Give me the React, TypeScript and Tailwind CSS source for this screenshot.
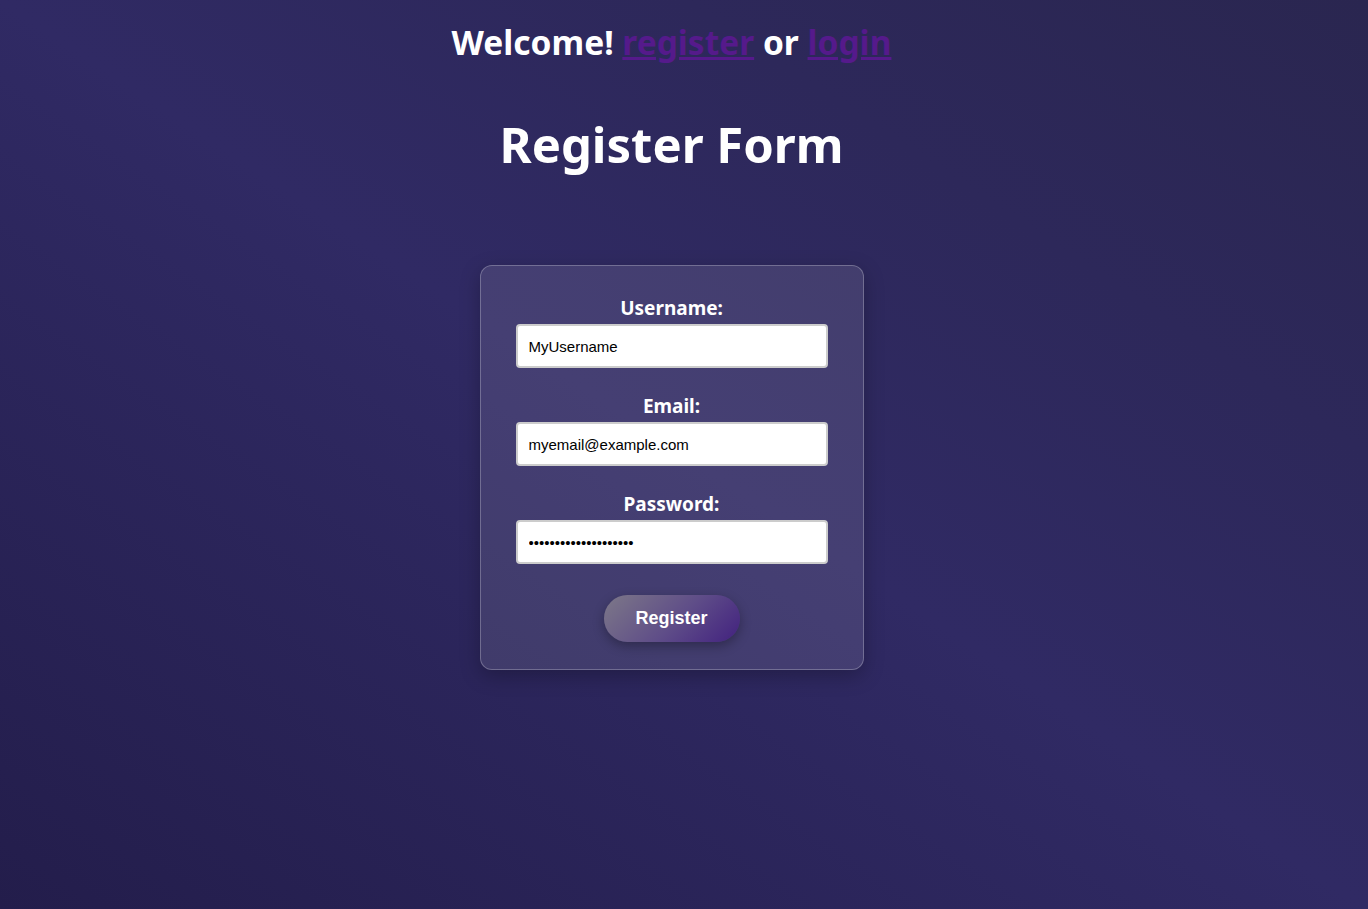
import { useState } from 'react';

const seg = { fontFamily: '"Noto Sans", "Open Sans", sans-serif' };

function Field({ label, type, value, onChange }: { label: string; type: string; value: string; onChange: (v: string) => void }) {
  return (
    <label className="flex flex-col items-center">
      <span className="mb-[3px] text-[19px] font-bold leading-[26px] text-white" style={seg}>
        {label}
      </span>
      <input
        type={type}
        value={value}
        onChange={(e) => onChange(e.target.value)}
        className="h-[44px] w-[312px] rounded-[4px] border-2 border-[#cccccc] bg-white px-[11px] text-[15px] text-black outline-none"
        style={{ fontFamily: '"Liberation Sans", Arial, sans-serif' }}
      />
    </label>
  );
}

export default function App() {
  const [username, setUsername] = useState('MyUsername');
  const [email, setEmail] = useState('myemail@example.com');
  const [password, setPassword] = useState('MySecretPassword1234');

  return (
    <div className="min-h-[909px] w-full bg-[linear-gradient(to_top_right,#231d4b,#302a64_50%,#2a2650)] pr-[25px] text-white">
      <div className="flex flex-col items-center">
        <h2 className="mt-[18px] text-[33.5px] font-bold leading-[48px]" style={seg}>
          Welcome!{' '}
          <a href="#" className="text-[#551a8b] underline">register</a>{' '}
          or{' '}
          <a href="#" className="text-[#551a8b] underline">login</a>
        </h2>
        <h1 className="mt-[42px] text-[49px] font-bold leading-[72px]" style={seg}>
          Register Form
        </h1>

        <form
          onSubmit={(e) => e.preventDefault()}
          className="mt-[85px] flex w-[384px] flex-col items-center gap-[31px] rounded-[12px] border border-white/25 bg-white/10 px-[35px] pb-[27px] pt-[29px] shadow-[0_6px_20px_rgba(0,0,0,0.25)]"
        >
          <Field label="Username:" type="text" value={username} onChange={setUsername} />
          <div className="-mt-[6px]">
            <Field label="Email:" type="email" value={email} onChange={setEmail} />
          </div>
          <div className="-mt-[6px]">
            <Field label="Password:" type="password" value={password} onChange={setPassword} />
          </div>
          <button
            type="submit"
            className="h-[47px] w-[136px] rounded-full bg-[linear-gradient(135deg,#7d7888,#5e4c88_55%,#42217f)] text-[18px] font-bold text-white shadow-[0_4px_12px_rgba(0,0,0,0.3)]"
            style={{ fontFamily: '"Liberation Sans", Arial, sans-serif' }}
          >
            Register
          </button>
        </form>
      </div>
    </div>
  );
}
